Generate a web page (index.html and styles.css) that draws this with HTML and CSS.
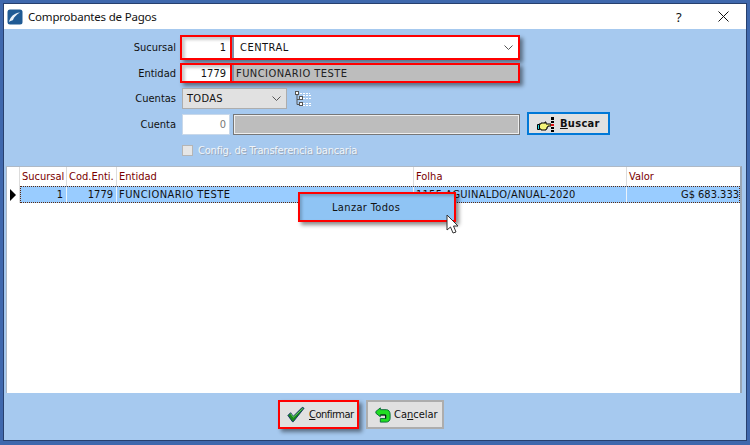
FILE: index.html
```html
<!DOCTYPE html>
<html lang="es">
<head>
<meta charset="utf-8">
<title>Comprobantes de Pagos</title>
<link rel="stylesheet" href="styles.css">
</head>
<body>
<div class="window">
  <header class="titlebar">
    <svg class="app-icon" width="16" height="16" viewBox="0 0 16 16"><rect x="0.5" y="0.5" width="15" height="15" rx="2.5" fill="#1f5a94"/><path d="M2 13C3 8 7 4 13 3.5C9.500 5.500 7 8 6 11C5 11.500 3.500 12 2 13Z" fill="#e8f0f8"/></svg>
    <span class="title">Comprobantes de Pagos</span>
    <span class="help">?</span>
    <svg class="close" width="11" height="11" viewBox="0 0 11 11"><path d="M0.500 0.500L10.500 10.500M10.500 0.500L0.500 10.500" stroke="#111" stroke-width="1" fill="none"/></svg>
  </header>
  <main class="content">
    <section class="form">
      <div class="row row-first">
        <label class="lbl">Sucursal</label>
        <div class="marked">
          <div class="input num">1</div>
          <div class="input wide spaced">CENTRAL<svg class="chev" width="9" height="5" viewBox="0 0 9 5"><path d="M0.500 0.500L4.500 4.500L8.500 0.500" stroke="#555" fill="none"/></svg></div>
        </div>
      </div>
      <div class="row row-second">
        <label class="lbl">Entidad</label>
        <div class="marked">
          <div class="input num">1779</div>
          <div class="input wide ro">FUNCIONARIO TESTE</div>
        </div>
      </div>
      <div class="row row-third">
        <label class="lbl">Cuentas</label>
        <div class="combo">TODAS<svg class="chev" width="9" height="5" viewBox="0 0 9 5"><path d="M0.500 0.500L4.500 4.500L8.500 0.500" stroke="#555" fill="none"/></svg></div>
        <svg class="tree" width="16" height="16" viewBox="0 0 16 16"><g fill="none" stroke="#555"><rect x="0.500" y="0.500" width="3" height="3" fill="#fff"/><path d="M2 4V13.500H4M2 8.500H4"/><rect x="4.500" y="5.500" width="3" height="3" fill="#fff"/><rect x="4.500" y="11.500" width="3" height="3" fill="#fff"/></g><path d="M5 2.500H15M8 4.500H16M8 7.500H16M8 12.500H16M8 14.500H16" stroke="#fff" stroke-dasharray="2 1"/></svg>
      </div>
      <div class="row row-fourth">
        <label class="lbl">Cuenta</label>
        <div class="input num num-off">0</div>
        <div class="input ro-plain"></div>
        <button class="buscar" type="button">
          <svg class="hand" width="22" height="20" viewBox="0 0 22 20"><path d="M3 10H5V9H9V8H10V10H15V12H12V13H11V15H10V16H5V15H3Z" fill="#f4f47a" stroke="#000"/><path d="M1.500 10.500H3.500V15.500H1.500Z" fill="#19d8e0" stroke="#000"/><rect x="15" y="3" width="3" height="3" fill="#000"/><rect x="15" y="7" width="3" height="2" fill="#000"/><rect x="15" y="10" width="3" height="2" fill="#e01010"/><rect x="15" y="13" width="3" height="2" fill="#000"/><rect x="15" y="16" width="3" height="2" fill="#000"/></svg>
          <span><u>B</u>uscar</span>
        </button>
      </div>
      <div class="row row-check">
        <span class="check"></span>
        <span class="check-lbl">Config. de Transferencia bancaria</span>
      </div>
    </section>
    <section class="grid">
      <div class="grid-head">
        <div class="ind"></div>
        <div class="c c1">Sucursal</div>
        <div class="c c2">Cod.Enti.</div>
        <div class="c c3">Entidad</div>
        <div class="c c4">Folha</div>
        <div class="c c5">Valor</div>
      </div>
      <div class="grid-row">
        <div class="ind"><span class="arrow"></span></div>
        <div class="cells">
          <div class="d c1 r">1</div>
          <div class="d c2 r">1779</div>
          <div class="d c3">FUNCIONARIO TESTE</div>
          <div class="d c4">1155 AGUINALDO/ANUAL-2020</div>
          <div class="d c5 r">G$ 683.333</div>
        </div>
      </div>
    </section>
    <footer class="actions">
      <button class="act act-ok" type="button">
        <svg width="18" height="17" viewBox="0 0 20 18"><path d="M1 10L4 7L7 11L17 1L19 2L7 17H6Z" fill="#1a8a1a" stroke="#0a2a6a" stroke-width="1"/><path d="M4 8L7 12L18 2" fill="none" stroke="#6fd06f"/></svg>
        <span class="tight"><u>C</u>onfirmar</span>
      </button>
      <button class="act act-cancel" type="button">
        <svg width="16" height="16" viewBox="0 0 18 18"><path d="M1 5L6 1V3H13C15 3 17 5 17 8V13C17 15 15 17 13 17H6V13H12V9H6V11L1 7Z" fill="#22dd22" stroke="#063" stroke-width="1"/><path d="M6 9H12V13" fill="none" stroke="#000"/></svg>
        <span>Ca<u>n</u>celar</span>
      </button>
    </footer>
    <div class="menu">Lanzar Todos</div>
    <svg class="cursor" width="14" height="21" viewBox="0 0 14 21"><path d="M1 1V16L4.500 13L7 19L10 18L7.500 12H12Z" fill="#fff" stroke="#333" stroke-width="1"/></svg>
  </main>
</div>
</body>
</html>
```
FILE: styles.css
```css
* { box-sizing: border-box; }
html, body { margin: 0; padding: 0; width: 750px; height: 445px; overflow: hidden; }
body { background: #3f68ad; font-family: "DejaVu Sans", "Liberation Sans", sans-serif; font-stretch: condensed; font-size: 11px; color: #111; }
.window { width: 750px; height: 445px; padding: 3px 3px 4px 3px; display: flex; flex-direction: column; }
.titlebar { height: 26px; flex: none; background: #fff; border: 1px solid #27406e; border-bottom: 0; display: flex; align-items: center; padding-left: 3px; }
.app-icon { flex: none; }
.title { margin-left: 5px; font-family: "Noto Sans", sans-serif; font-stretch: normal; font-size: 11.5px; letter-spacing: -0.2px; color: #111; }
.help { margin-left: auto; font-family: "Noto Sans", sans-serif; font-stretch: normal; font-size: 13px; width: 12px; }
.close { margin: 0 17px 0 30px; }
.content { position: relative; flex: 1; background: #a6c9ef; border: 1px solid #27406e; border-top: 0; display: flex; flex-direction: column; }
.form { height: 137px; flex: none; padding-top: 6px; }
.row { display: flex; align-items: center; }
.row-first { height: 25px; }
.row-second { height: 20px; margin-top: 3px; }
.row-third { height: 21px; margin-top: 5px; }
.row-fourth { height: 21px; margin-top: 5px; }
.row-check { margin-top: 10px; height: 11px; padding-left: 178px; }
.lbl { width: 172px; text-align: right; flex: none; }
.marked { display: flex; align-self: stretch; margin-left: 4px; width: 340px; border: 2px solid #f00; box-shadow: 3px 3px 4px rgba(0,0,0,.45); }
.input { background: #fff; flex: none; display: flex; align-items: center; }
.num { width: 48px; justify-content: flex-end; padding-right: 3px; height: 21px; }
.marked .num { height: auto; width: 50px; padding-right: 4px; border-right: 2px solid #f00; box-shadow: inset 3px 3px 3px rgba(0,0,0,.2); }
.wide { width: 286px; padding-left: 6px; padding-right: 5px; justify-content: space-between; border-left: 2px solid #7f8fa8; }
.spaced { letter-spacing: 0.5px; }
.ro { background: #bdbdbd; color: #222; padding-left: 2px; letter-spacing: 0.45px; }
.row-fourth .num { margin-left: 6px; }
.num-off { color: #777; border: 1px solid #c8d8ea; }
.ro-plain { width: 287px; height: 21px; margin-left: 3px; background: #bdbdbd; border: 1px solid #777; box-shadow: inset 0 0 0 1px #eee; }
.combo { width: 105px; height: 21px; margin-left: 6px; background: #e1e1e1; border: 1px solid #adadad; display: flex; align-items: center; justify-content: space-between; padding: 0 5px 0 4px; letter-spacing: 0.3px; }
.tree { margin-left: 8px; }
.buscar { width: 83px; height: 23px; margin-left: 7px; align-self: flex-start; margin-top: -2px; background: #e1e1e1; border: 2px solid #0078d7; display: flex; align-items: center; justify-content: flex-start; gap: 2px; padding: 0 0 0 7px; font: inherit; font-weight: bold; letter-spacing: 0.3px; color: #111; }
.check { width: 11px; height: 11px; background: #e6e6e6; border: 1px solid #b5b5b5; flex: none; }
.check-lbl { margin-left: 5px; color: #f1f5fa; text-shadow: 1px 1px 0 #9aa8b8; letter-spacing: -0.2px; }
.grid { flex: 1; margin: 0 4px 0 2px; background: #fff; border: 1px solid #aeb9c6; border-right: 2px solid #9aa6b4; border-bottom: 0; }
.grid-head { display: flex; height: 19px; align-items: stretch; }
.c { color: #7a0000; border-right: 1px solid #dcdcdc; padding: 3px 0 0 2px; white-space: nowrap; overflow: hidden; }
.ind { width: 13px; flex: none; display: flex; align-items: center; justify-content: center; border-right: 1px solid #dcdcdc; }
.c1 { width: 47px; }
.c2 { width: 50px; }
.c3 { width: 297px; }
.c4 { width: 213px; }
.c5 { width: 113px; border-right: 0; }
.grid-row { display: flex; height: 17px; }
.arrow { width: 0; height: 0; border-left: 6px solid #000; border-top: 6px solid transparent; border-bottom: 6px solid transparent; }
.cells { display: flex; border: 1px dotted #5a2a10; background: #99ccff; height: 17px; width: 720px; }
.d { height: 15px; line-height: 16px; padding: 0 2px; border-right: 1px solid #eaf2fa; white-space: nowrap; overflow: hidden; flex: none; }
.d.c1 { width: 46px; }
.d.c3 { letter-spacing: 0.45px; }
.d.c4 { letter-spacing: 0.25px; }
.d.c5 { width: 112px; border-right: 0; padding-right: 0; }
.r { text-align: right; padding-right: 3px; }
.actions { height: 47px; flex: none; display: flex; align-items: flex-start; gap: 7px; padding: 7px 0 0 274px; }
.act { height: 29px; background: #e1e1e1; border: 2px solid #adadad; display: flex; align-items: center; justify-content: flex-start; gap: 4px; padding: 0 0 0 7px; font: inherit; color: #111; flex: none; }
.tight { letter-spacing: -0.5px; }
.act-ok { width: 81px; border-color: #f00; box-shadow: 3px 3px 4px rgba(0,0,0,.45); }
.act-cancel { width: 78px; gap: 3px; }
.menu { position: absolute; left: 294px; top: 163px; width: 158px; height: 30px; background: #8fc4f4; color: #111; border: 2px solid #f00; display: flex; align-items: center; padding-left: 32px; box-shadow: 3px 3px 4px rgba(0,0,0,.45), inset 2px 2px 3px rgba(0,0,0,.2); letter-spacing: 0.35px; }
.cursor { position: absolute; left: 442px; top: 185px; }
```
